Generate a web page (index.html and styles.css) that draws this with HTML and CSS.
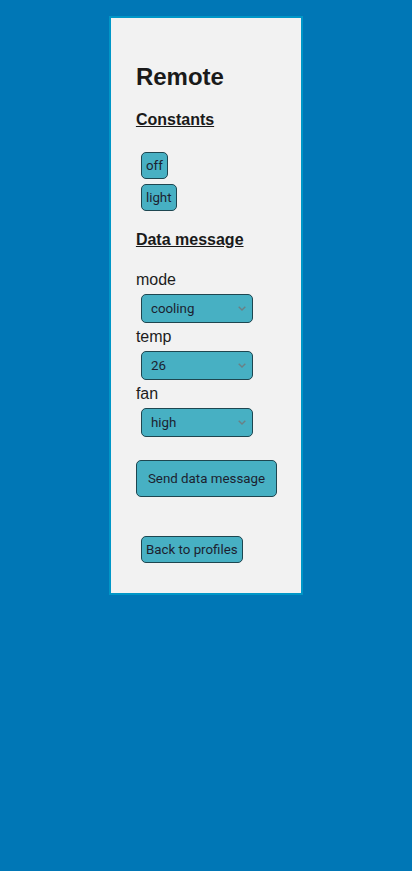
FILE: index.html
```html
<!DOCTYPE html>
<html lang="en">
<head>
<meta charset="utf-8">
<title>Remote</title>
<link rel="stylesheet" href="styles.css">
</head>
<body>
<main class="card">
  <h2 class="title">Remote</h2>
  <h4 class="section section-first">Constants</h4>
  <button class="btn btn-first" type="button">off</button>
  <button class="btn btn-next" type="button">light</button>
  <h4 class="section">Data message</h4>
  <label class="field-label field-label-first" for="mode">mode</label>
  <div class="select-wrap">
    <select id="mode" class="select"><option>cooling</option><option>heating</option></select>
    <svg class="chevron" width="8" height="5" viewBox="0 0 8 5"><path d="M0.7 0.7 L4 4 L7.3 0.7" fill="none" stroke="#6b8085" stroke-width="1.4"/></svg>
  </div>
  <label class="field-label" for="temp">temp</label>
  <div class="select-wrap">
    <select id="temp" class="select"><option>26</option><option>25</option></select>
    <svg class="chevron" width="8" height="5" viewBox="0 0 8 5"><path d="M0.7 0.7 L4 4 L7.3 0.7" fill="none" stroke="#6b8085" stroke-width="1.4"/></svg>
  </div>
  <label class="field-label" for="fan">fan</label>
  <div class="select-wrap">
    <select id="fan" class="select"><option>high</option><option>low</option></select>
    <svg class="chevron" width="8" height="5" viewBox="0 0 8 5"><path d="M0.7 0.7 L4 4 L7.3 0.7" fill="none" stroke="#6b8085" stroke-width="1.4"/></svg>
  </div>
  <button class="btn-send" type="button">Send data message</button>
  <button class="btn btn-back" type="button">Back to profiles</button>
</main>
</body>
</html>
```
FILE: styles.css
```css
html, body {
  margin: 0;
  padding: 0;
}
body {
  background: #0077b6;
  min-height: 871px;
  font-family: "Liberation Sans", Arial, sans-serif;
  color: #1c1c1c;
}
.card {
  width: fit-content;
  margin: 16px auto 0;
  border: 2px solid #0096c7;
  background: #f2f2f2;
  padding: 0 24px 30px 25px;
  display: flex;
  flex-direction: column;
  align-items: flex-start;
  box-sizing: content-box;
}
.title {
  margin: 45px 0 0;
  font-size: 24px;
  font-weight: bold;
  line-height: normal;
  color: #1a1a1a;
}
.section {
  margin: 20px 0 0;
  font-size: 16px;
  font-weight: bold;
  text-decoration: underline;
  line-height: normal;
  color: #1a1a1a;
}
.btn {
  font-family: Roboto, "Noto Sans", sans-serif;
  font-size: 13.33px;
  line-height: 15px;
  height: 27px;
  padding: 0 4px;
  margin-left: 5px;
  background: #47b0c3;
  color: #1c1f30;
  border: 1px solid #1e4650;
  border-radius: 5px;
  cursor: pointer;
}
.btn-first {
  margin-top: 23px;
}
.btn-next {
  margin-top: 5px;
}
.btn-back {
  margin-top: 39px;
}
.field-label {
  display: block;
  margin-top: 5px;
  font-size: 16px;
  line-height: normal;
  color: #1c1c1c;
}
.field-label-first {
  margin-top: 21.5px;
}
.select-wrap {
  position: relative;
  margin: 5px 0 0 5px;
  width: 112px;
  height: 29px;
}
.select {
  appearance: none;
  -webkit-appearance: none;
  width: 112px;
  height: 29px;
  box-sizing: border-box;
  padding: 0 0 0 9px;
  font-family: Roboto, "Noto Sans", sans-serif;
  font-size: 13.33px;
  background: #47b0c3;
  color: #1c1f30;
  border: 1px solid #1e4650;
  border-radius: 5px;
  outline: none;
}
.chevron {
  position: absolute;
  right: 7px;
  top: 12px;
  pointer-events: none;
}
.btn-send {
  margin-top: 23px;
  height: 37px;
  padding: 0 11px;
  font-family: Roboto, "Noto Sans", sans-serif;
  font-size: 13.33px;
  background: #47b0c3;
  color: #1c1f30;
  border: 1px solid #1e4650;
  border-radius: 5px;
  cursor: pointer;
}
```
